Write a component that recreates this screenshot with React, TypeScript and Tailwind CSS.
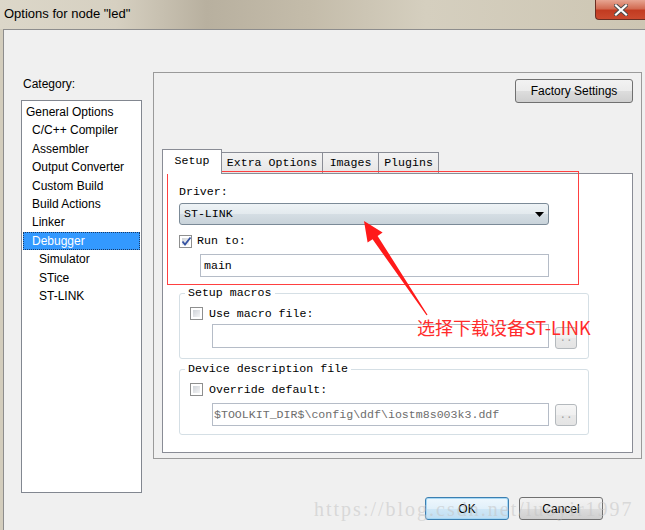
import React from 'react';

const categories: [string, number][] = [
  ['General Options', 0],
  ['C/C++ Compiler', 1],
  ['Assembler', 1],
  ['Output Converter', 1],
  ['Custom Build', 1],
  ['Build Actions', 1],
  ['Linker', 1],
  ['Debugger', 1],
  ['Simulator', 2],
  ['STice', 2],
  ['ST-LINK', 2],
];

const indent = ['pl-[2px]', 'pl-[8px]', 'pl-[15px]'];

function CheckBox({ checked = false }: { checked?: boolean }) {
  return (
    <span className="relative flex h-[13px] w-[13px] shrink-0 border border-[#8e8f8f] bg-white p-[2px]">
      <span className="h-full w-full bg-[linear-gradient(135deg,#cfd3d8,#f4f5f6)]" />
      {checked && (
        <svg className="absolute left-[1px] top-[0px]" width="11" height="11" viewBox="0 0 11 11">
          <path d="M1.5 5.5 L4 8.5 L9.5 1.5" fill="none" stroke="#3553a3" strokeWidth="1.8" />
        </svg>
      )}
    </span>
  );
}

function BrowseButton({ className }: { className: string }) {
  return (
    <div
      className={`flex h-[22px] w-[22px] items-center justify-center rounded-[3px] border border-[#b4b9bd] bg-[linear-gradient(#f6f6f6,#f0f0f0_50%,#e9e9e9_50%,#e4e4e4)] text-[11px] leading-none text-[#a0a0a0] ${className}`}
    >
      ..
    </div>
  );
}

export default function App() {
  return (
    <div className="relative flex h-[530px] w-[645px] flex-col overflow-hidden bg-[#d3cdbd] font-['Liberation_Sans',Arial,sans-serif] text-[12px] text-black">
      {/* Title bar */}
      <div className="flex h-[29px] shrink-0 items-start justify-between bg-[linear-gradient(90deg,#dcd7c9_0%,#d6d0c1_18%,#b8b09f_32%,#c4bcaa_48%,#d5cfbf_66%,#cdc6b3_100%)]">
        <div className="pl-[4px] pt-[6px] text-[13px] leading-[16px] text-black">Options for node "led"</div>
        <div className="flex h-[20px] w-[50px] items-center justify-center rounded-bl-[4px] border border-t-0 border-r-0 border-[#6a2d22] bg-[linear-gradient(#e7a592,#d26c53_45%,#c23b21_55%,#cb4a2e)]">
          <svg width="14" height="12" viewBox="0 0 14 12">
            <path d="M2 1.5 L12 10.5 M12 1.5 L2 10.5" stroke="#4b4b4b" strokeWidth="4" strokeLinecap="square" />
            <path d="M2 1.5 L12 10.5 M12 1.5 L2 10.5" stroke="#ffffff" strokeWidth="2.2" strokeLinecap="square" />
          </svg>
        </div>
      </div>

      {/* Window body */}
      <div className="ml-[3px] flex flex-1 flex-col border-l border-t border-[#8d8d8d] bg-[#f0f0f0] pl-[17px] pt-[42px]">
        <div className="flex items-start">
          {/* Category list */}
          <div className="w-[121px] shrink-0">
            <div className="ml-[2px] mt-[4px] leading-[16px]">Category:</div>
            <div className="mt-[8px] h-[393px] border border-[#828790] bg-white pt-[2px]">
              {categories.map(([name, depth]) => {
                const selected = name === 'Debugger';
                return (
                  <div
                    key={name}
                    className={`mx-px h-[18.4px] leading-[17px] ${indent[depth]} ${
                      selected ? 'border border-dotted border-[#1a3a66] bg-[#3399ff] text-white' : 'border border-transparent'
                    }`}
                  >
                    {name}
                  </div>
                );
              })}
            </div>
          </div>

          {/* Options panel */}
          <div className="ml-[11px] flex h-[387px] w-[489px] flex-col border border-[#9a9a9a] bg-[#f0f0f0]">
            <div className="flex justify-end pr-[8px] pt-[6px]">
              <div className="flex h-[24px] w-[118px] items-center justify-center rounded-[3px] border border-[#707070] bg-[linear-gradient(#f2f2f2,#ebebeb_50%,#dddddd_50%,#cfcfcf)]">
                Factory Settings
              </div>
            </div>

            {/* Tabs */}
            <div className="mt-[46px] flex items-end pl-[8px] font-['Liberation_Mono',monospace] text-[11.6px]">
              <div className="relative z-10 -mb-px flex h-[25px] w-[60px] items-start justify-center border border-b-0 border-[#898c95] bg-white pt-[4px] leading-[14px]">
                Setup
              </div>
              <div className="flex h-[21px] w-[101px] items-center justify-center border border-b-0 border-l-0 border-[#898c95] bg-[linear-gradient(#f3f3f3,#e6e6e6)] leading-[14px]">
                Extra Options
              </div>
              <div className="flex h-[21px] w-[56px] items-center justify-center border border-b-0 border-l-0 border-[#898c95] bg-[linear-gradient(#f3f3f3,#e6e6e6)] leading-[14px]">
                Images
              </div>
              <div className="flex h-[21px] w-[60px] items-center justify-center border border-b-0 border-l-0 border-[#898c95] bg-[linear-gradient(#f3f3f3,#e6e6e6)] leading-[14px]">
                Plugins
              </div>
            </div>

            {/* Tab page */}
            <div className="ml-[8px] h-[280px] w-[471px] border border-[#898c95] bg-white pl-[16px] pt-[11px] font-['Liberation_Mono',monospace] text-[11.6px] leading-[14px]">
              <div>Driver:</div>
              <div className="mt-[4px] flex h-[22px] w-[370px] items-center justify-between rounded-[3px] border border-[#7b8a97] bg-[linear-gradient(#eef3f6,#e3eaee_50%,#d5dee4_50%,#c9d3da)] pl-[4px] pr-[4px]">
                <span>ST-LINK</span>
                <svg width="9" height="5" viewBox="0 0 9 5">
                  <path d="M0 0 H9 L4.5 5 Z" fill="#000" />
                </svg>
              </div>

              <div className="mt-[9px] flex h-[14px] items-center">
                <CheckBox checked />
                <span className="ml-[5px]">Run to:</span>
              </div>
              <div className="ml-[21px] mt-[6px] flex h-[23px] w-[349px] items-center border border-[#b5bcc7] bg-white pl-[3px]">
                main
              </div>

              <fieldset className="mt-[9px] w-[410px] rounded-[3px] border border-[#d5dfe5] p-0 pb-[9px]">
                <legend className="ml-[5px] px-[3px] leading-[14px]">Setup macros</legend>
                <div className="mt-[7px] flex h-[13px] items-center pl-[10px]">
                  <CheckBox />
                  <span className="ml-[6px]">Use macro file:</span>
                </div>
                <div className="mt-[4px] flex items-start pl-[32px]">
                  <div className="h-[24px] w-[337px] border border-[#b5bcc7] bg-white" />
                  <BrowseButton className="ml-[6px] mt-[3px]" />
                </div>
              </fieldset>

              <fieldset className="mt-[3px] w-[410px] rounded-[3px] border border-[#d5dfe5] p-0 pb-[8px]">
                <legend className="ml-[5px] px-[3px] leading-[14px]">Device description file</legend>
                <div className="mt-[7px] flex h-[13px] items-center pl-[10px]">
                  <CheckBox />
                  <span className="ml-[6px]">Override default:</span>
                </div>
                <div className="mt-[7px] flex items-start pl-[32px]">
                  <div className="flex h-[23px] w-[337px] items-center border border-[#b5bcc7] bg-white pl-[1px] text-[#6d6d6d]">
                    $TOOLKIT_DIR$\config\ddf\iostm8s003k3.ddf
                  </div>
                  <BrowseButton className="ml-[6px] mt-[1px]" />
                </div>
              </fieldset>
            </div>
          </div>
        </div>

        {/* Dialog buttons */}
        <div className="mt-[4px] flex justify-end gap-[10px] pr-[42px]">
          <div className="flex h-[23px] w-[84px] items-center justify-center rounded-[3px] border border-[#3c7fb1] bg-[linear-gradient(#eef7fd,#e1f0fa_50%,#cfe7f6_50%,#c1dff3)] shadow-[inset_0_0_0_1px_#a6d8f5]">
            OK
          </div>
          <div className="flex h-[23px] w-[84px] items-center justify-center rounded-[3px] border border-[#707070] bg-[linear-gradient(#f2f2f2,#ebebeb_50%,#dddddd_50%,#cfcfcf)]">
            Cancel
          </div>
        </div>
      </div>

      {/* Annotation overlay */}
      <div className="pointer-events-none absolute left-[167px] top-[171px] h-[114px] w-[412px] border border-[#ff4040]" />
      <svg className="pointer-events-none absolute left-0 top-0" width="645" height="530" viewBox="0 0 645 530">
        <polygon
          points="364,221 382.6,232.6 377.6,235.9 427.5,314.7 426.5,315.3 372.6,239.3 367.6,242.6"
          fill="#ff1a1a"
        />
      </svg>
      <div className="pointer-events-none absolute left-[417px] top-[315px] font-['Noto_Sans_CJK_SC',sans-serif] text-[18px] leading-[24px] text-[#ff2b2b]">
        选择下载设备ST-LINK
      </div>
      <div className="pointer-events-none absolute left-[314px] top-[497px] font-['Liberation_Serif',serif] text-[20px] leading-[24px] tracking-[2px] text-[#c4c4c4]/55">
        https://blog.csdn.net/luoyir1997
      </div>
    </div>
  );
}
